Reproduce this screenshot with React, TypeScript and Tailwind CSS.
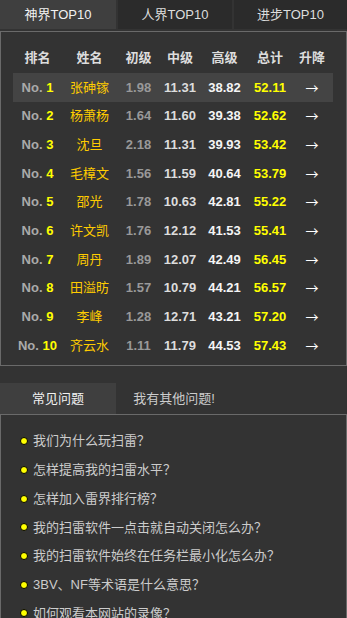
import React from "react";

const rows = [
  { no: 1, name: "张砷镓", a: "1.98", b: "11.31", c: "38.82", t: "52.11" },
  { no: 2, name: "杨萧杨", a: "1.64", b: "11.60", c: "39.38", t: "52.62" },
  { no: 3, name: "沈旦", a: "2.18", b: "11.31", c: "39.93", t: "53.42" },
  { no: 4, name: "毛樟文", a: "1.56", b: "11.59", c: "40.64", t: "53.79" },
  { no: 5, name: "邵光", a: "1.78", b: "10.63", c: "42.81", t: "55.22" },
  { no: 6, name: "许文凯", a: "1.76", b: "12.12", c: "41.53", t: "55.41" },
  { no: 7, name: "周丹", a: "1.89", b: "12.07", c: "42.49", t: "56.45" },
  { no: 8, name: "田溢昉", a: "1.57", b: "10.79", c: "44.21", t: "56.57" },
  { no: 9, name: "李峰", a: "1.28", b: "12.71", c: "43.21", t: "57.20" },
  { no: 10, name: "齐云水", a: "1.11", b: "11.79", c: "44.53", t: "57.43" },
];

const faqs = [
  "我们为什么玩扫雷？",
  "怎样提高我的扫雷水平？",
  "怎样加入雷界排行榜？",
  "我的扫雷软件一点击就自动关闭怎么办？",
  "我的扫雷软件始终在任务栏最小化怎么办？",
  "3BV、NF等术语是什么意思？",
  "如何观看本网站的录像？",
];

const cols = ["w-[49px]", "w-[55px]", "w-[43px]", "w-[40px]", "w-[49px]", "w-[42px]", "w-[42px]"];

export default function App() {
  return (
    <div
      className="w-[347px] min-h-[618px] overflow-hidden bg-[#333333] text-[13px]"
      style={{ fontFamily: '"Liberation Sans", Arial, "Noto Sans CJK SC", sans-serif' }}
    >
      {/* Top tabs */}
      <div className="flex gap-[2px] mb-[2px]">
        <div className="w-[116px] h-[29px] flex items-center justify-center bg-[#3f3f3f] text-[#f2f2f2]">神界TOP10</div>
        <div className="w-[114px] h-[29px] flex items-center justify-center bg-[#2b2b2b] text-[#dddddd]">人界TOP10</div>
        <div className="flex-1 h-[29px] flex items-center justify-center bg-[#2b2b2b] text-[#dddddd]">进步TOP10</div>
      </div>

      {/* Ranking panel */}
      <div className="border border-[#6a6a6a] pt-[11px] pb-[5px] px-[12px]">
        <table className="w-[320px] border-collapse table-fixed font-bold">
          <thead>
            <tr className="h-[30px] text-[#dddddd]">
              {["排名", "姓名", "初级", "中级", "高级", "总计", "升降"].map((h, i) => (
                <th key={h} className={`${cols[i]} text-center font-bold p-0`}>
                  {h}
                </th>
              ))}
            </tr>
          </thead>
          <tbody>
            {rows.map((r) => (
              <tr key={r.no} className={`h-[28.7px] ${r.no === 1 ? "bg-[#444444]" : ""}`}>
                <td className="text-center p-0 whitespace-nowrap">
                  <span className="text-[#aaaaaa]">No. </span>
                  <span className="text-[#ffff00]">{r.no}</span>
                </td>
                <td className="text-center p-0 font-normal text-[#ffcc00]">{r.name}</td>
                <td className="text-center p-0 text-[#999999]">{r.a}</td>
                <td className="text-center p-0 text-[#dddddd]">{r.b}</td>
                <td className="text-center p-0 text-[#f5f5f5]">{r.c}</td>
                <td className="text-center p-0 text-[#ffff00]">{r.t}</td>
                <td className="text-center p-0 font-normal text-white text-[13px] font-['Noto_Sans_CJK_SC',sans-serif]">→</td>
              </tr>
            ))}
          </tbody>
        </table>
      </div>

      {/* FAQ tabs */}
      <div className="flex mt-[17px]">
        <div className="w-[116px] h-[31px] flex items-center justify-center bg-[#3f3f3f] text-[#f2f2f2]">常见问题</div>
        <div className="w-[116px] h-[31px] flex items-center justify-center text-[#cccccc]">我有其他问题!</div>
      </div>

      <div className="border border-[#6a6a6a] pt-[12px] pl-[19px] min-h-[220px]">
        <ul>
          {faqs.map((q) => (
            <li key={q} className="h-[28.7px] flex items-center gap-[5px] text-[#cccccc]">
              <span className="w-[8px] h-[8px] rounded-full bg-[#ffff00] border border-black shrink-0" />
              <span>{q}</span>
            </li>
          ))}
        </ul>
      </div>
    </div>
  );
}
